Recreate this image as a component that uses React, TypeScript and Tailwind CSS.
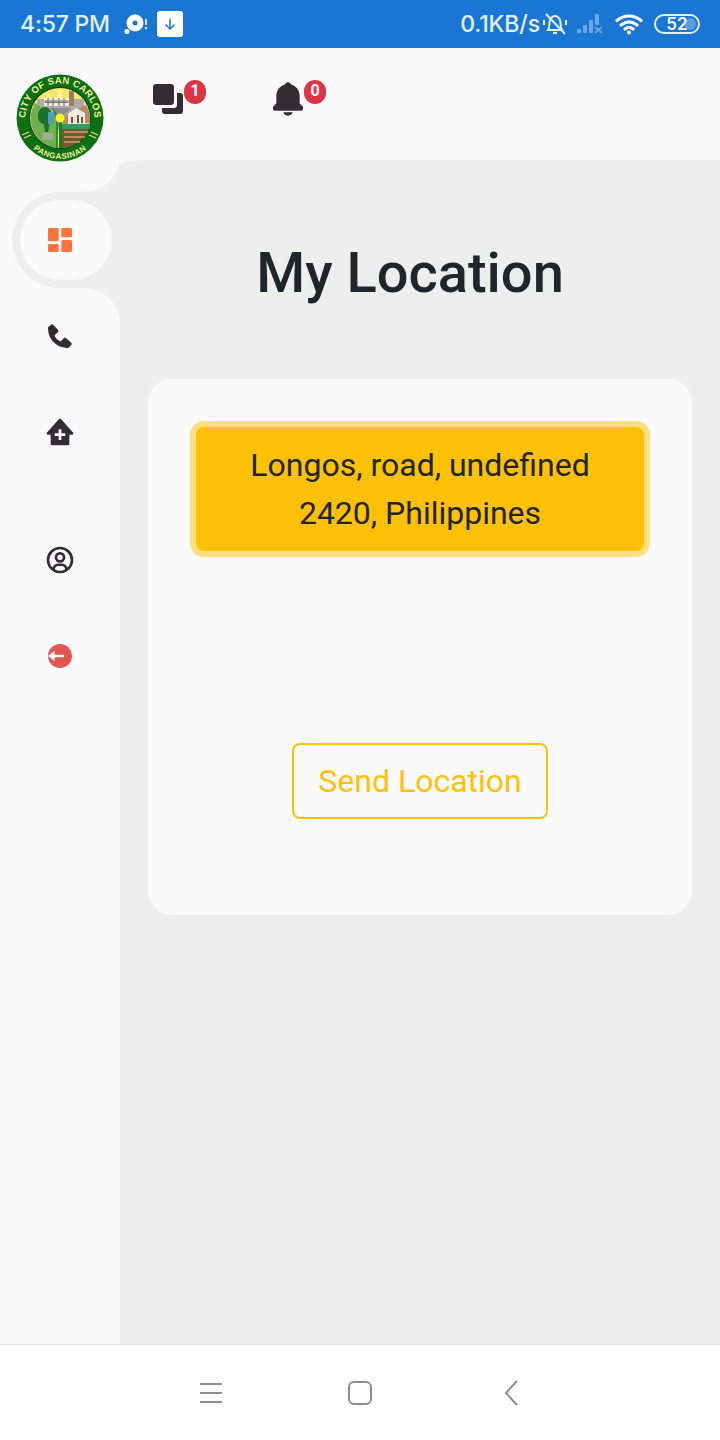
import { BiSolidBell, BiSolidClinic, BiSolidCopy, BiSolidDashboard, BiSolidLogOutCircle, BiSolidPhone, BiUserCircle } from 'react-icons/bi';

function Logo() {
  return (
    <svg viewBox="0 0 88 88" className="w-[88px] h-[88px]">
      <defs>
        <path id="arcTop" d="M 44 78.500 A 34.500 34.500 0 0 1 44 9.500 A 34.500 34.500 0 0 1 44 78.500" />
        <path id="arcBottom" d="M 3 44 A 41 41 0 0 0 85 44" />
      </defs>
      <circle cx="44" cy="44" r="43.500" fill="#0b7012" />
      <circle cx="44" cy="44" r="31" fill="#183d12" />
      <circle cx="44" cy="44" r="30" fill="#f3e96a" />
      {/* top: sunrise, city hall and road */}
      <path d="M44 15 L40 30 L48 30 Z M30 18 L37 30 L41 30 Z M58 18 L51 30 L47 30 Z" fill="#fff8b0" />
      <path d="M21 25 h47 v9 l-24 10 l-23 -10 Z" fill="#b0aca4" />
      <path d="M28 24 h25 v8 h-25 Z" fill="#efece6" />
      <path d="M29 27 h23 v1.500 h-23 Z M32 24 v8 M37 24 v8 M43 24 v8 M48 24 v8" stroke="#6f6a60" strokeWidth="1" fill="none" />
      <path d="M53 17 h5 v15 h-5 Z" fill="#9a7d62" />
      <path d="M44 44 L33 34 H56 Z" fill="#8d8d8d" />
      {/* left: forest */}
      <path d="M44 44 L19 29 A30 30 0 0 0 40 74 Z" fill="#6db04f" />
      <path d="M22 44 a7 9 0 1 1 12 4 l-2 10 h-3 l-1 -8 a7 7 0 0 1 -6 -6 Z" fill="#1e6f2b" />
      <path d="M32 38 h6 v12 h-6 Z" fill="#4fa0bd" />
      <path d="M26 59 h11 v7 h-11 Z" fill="#a6ad8e" />
      <path d="M36 32 l6 10 v32 h-2 v-28 Z" fill="#2f8a2f" />
      {/* right: heritage building */}
      <path d="M44 44 L70 31 A30 30 0 0 1 74 49 L47 50 Z" fill="#b98a66" />
      <path d="M52 40 l8 -6 l9 5 v11 h-17 Z" fill="#f3ece0" />
      <path d="M55 43 h2 v6 h-2 Z M61 41 h2 v8 h-2 Z M65 43 h2 v6 h-2 Z" fill="#7a4e38" />
      {/* bottom right: fields */}
      <path d="M46 50 H74 A30 30 0 0 1 46 74 Z" fill="#72582f" />
      <path d="M46 50 H74 V55 H46 Z" fill="#2e9b66" />
      <path d="M48 57 H72 V59 H48 Z M48 62 H69 V64 H48 Z M48 67 H64 V69 H48 Z" fill="#b98d5c" />
      <path d="M43 46 h3 v28 h-3 Z" fill="#1f7a26" />
      <circle cx="44" cy="44" r="4.500" fill="#fbf52a" />
      {/* laurels */}
      <path d="M6 61 l7 -3 M8 64 l7 -3" stroke="#e8e27a" strokeWidth="1.300" />
      <path d="M82 61 l-7 -3 M80 64 l-7 -3" stroke="#e8e27a" strokeWidth="1.300" />
      <text className="font-['Liberation_Sans',sans-serif] font-bold" fontSize="9.500" letterSpacing="0.300" fill="#f5f19a">
        <textPath href="#arcTop" startOffset="50%" textAnchor="middle">CITY OF SAN CARLOS</textPath>
      </text>
      <text className="font-['Liberation_Sans',sans-serif] font-bold" fontSize="8" letterSpacing="0.500" fill="#f5f19a">
        <textPath href="#arcBottom" startOffset="50%" textAnchor="middle">PANGASINAN</textPath>
      </text>
    </svg>
  );
}

function NavIcon({ children }: { children: React.ReactNode }) {
  return <div className="h-24 flex items-center justify-center">{children}</div>;
}

function HeaderIcon({ count, children }: { count: number; children: React.ReactNode }) {
  return (
    <div className="relative w-10 h-10 text-[#312d35] flex items-center justify-center">
      {children}
      <span className="absolute top-px -right-[18px] w-[22px] h-[24px] rounded-full bg-[#dc3545] text-[#fafafa] text-[16px] leading-[22px] font-bold text-center">
        {count}
      </span>
    </div>
  );
}

export default function App() {
  return (
    <div className="w-[720px] h-[1440px] flex flex-col bg-[#eeeeee] font-['Roboto',sans-serif] overflow-hidden">
      {/* Status bar */}
      <div className="h-12 shrink-0 bg-[#1976d2] text-[#e3f1fd] flex items-center justify-between pl-[20px] pr-[20px] font-['Inter',sans-serif] font-medium">
        <div className="flex items-center">
          <span className="text-[23px] tracking-[-0.2px]">4:57 PM</span>
          <svg viewBox="0 0 26 24" className="w-[26px] h-6 ml-[13px]">
            <circle cx="12" cy="11" r="8.500" fill="#fff" />
            <circle cx="12" cy="11" r="2.500" fill="#1976d2" />
            <circle cx="4" cy="19.500" r="2.500" fill="#fff" />
            <path d="M23 7v6" stroke="#fff" strokeWidth="1.600" />
            <path d="M23 15v2" stroke="#fff" strokeWidth="1.600" />
          </svg>
          <div className="w-[26px] h-[26px] ml-[8px] rounded-[3px] bg-white flex items-center justify-center">
            <svg viewBox="0 0 16 16" className="w-4 h-4" fill="none" stroke="#1976d2" strokeWidth="1.500">
              <path d="M8 2.500v10M3.500 8.500 8 13l4.500-4.500" />
            </svg>
          </div>
        </div>
        <div className="flex items-center">
          <span className="text-[23px] tracking-[-0.1px]">0.1KB/s</span>
          <svg viewBox="0 0 26 26" className="w-[26px] h-[26px] ml-[2px]" fill="none" stroke="#e3f1fd" strokeWidth="2">
            <path d="M6 19c2-3 1-7 2-10 1-2 3-4 5-4s4 2 5 4c1 3 0 7 2 10Z" />
            <path d="M11 22h4M4 3l19 20M2 9v5M24 9v5" />
          </svg>
          <svg viewBox="0 0 28 24" className="w-[28px] h-6 ml-[8px]" fill="#6ba6e6">
            <rect x="1" y="17" width="4" height="4" rx="1" />
            <rect x="7" y="13" width="4" height="8" rx="1" />
            <rect x="13" y="8" width="4" height="13" rx="1" />
            <rect x="19" y="2" width="4" height="11" rx="1" />
            <path d="M19 15l7 6M26 15l-7 6" stroke="#6ba6e6" strokeWidth="1.800" />
          </svg>
          <svg viewBox="0 0 28 22" className="w-[28px] h-[22px] ml-[11px]" fill="none" stroke="#fff" strokeWidth="3.200" strokeLinecap="round">
            <path d="M2 7.500c7-6 17-6 24 0M6 12c5-4 11-4 16 0M10 16c2.500-2 5.500-2 8 0" />
            <circle cx="14" cy="19.500" r="2" fill="#fff" stroke="none" />
          </svg>
          <div className="relative w-[46px] h-[20px] ml-[11px] rounded-full border-2 border-[#e3f1fd] overflow-hidden flex items-center justify-center">
            <div className="absolute right-[2px] top-[2px] bottom-[2px] w-[12px] rounded-full bg-[#5b9de0]" />
            <span className="relative text-[17px] leading-none font-semibold text-white">52</span>
          </div>
        </div>
      </div>

      <div className="flex-1 flex min-h-0">
        {/* Sidebar */}
        <aside className="w-[120px] shrink-0 flex flex-col">
          <div className="h-[144px] bg-[#fafafa] rounded-br-[36px] pt-[26px] pl-4">
            <Logo />
          </div>
          <div className="h-24 bg-[#fafafa] pl-3">
            <div className="h-full bg-[#eeeeee] rounded-l-[48px] py-2 pl-2 pr-2">
              <div className="h-full bg-[#fafafa] rounded-[40px] flex items-center pl-6">
                <BiSolidDashboard className="w-8 h-8 text-[#fd7238]" />
              </div>
            </div>
          </div>
          <div className="flex-1 bg-[#fafafa] rounded-tr-[36px]">
            <NavIcon>
              <BiSolidPhone className="w-8 h-8 text-[#312d35]" />
            </NavIcon>
            <NavIcon>
              <BiSolidClinic className="w-8 h-8 text-[#312d35]" />
            </NavIcon>
            <div className="h-8" />
            <NavIcon>
              <BiUserCircle className="w-8 h-8 text-[#312d35]" />
            </NavIcon>
            <NavIcon>
              <BiSolidLogOutCircle className="w-8 h-8 text-[#e2564f]" />
            </NavIcon>
          </div>
        </aside>

        <div className="flex-1 flex flex-col bg-[#fafafa]">
          {/* Top bar */}
          <header className="h-[112px] shrink-0 flex items-start pt-[31px] pl-[28px] gap-[80px]">
            <HeaderIcon count={1}>
              <BiSolidCopy className="w-9 h-9 -scale-y-100" />
            </HeaderIcon>
            <HeaderIcon count={0}>
              <BiSolidBell className="w-10 h-10" />
            </HeaderIcon>
          </header>

          <main className="flex-1 bg-[#eeeeee] rounded-tl-[22px_6px] px-7">
            <h1 className="mt-[75px] pr-5 text-center text-[56px] leading-[76px] font-medium text-[#212529]">My Location</h1>
            <section className="mt-[68px] h-[536px] rounded-[24px] bg-[#fafafa] flex flex-col items-center pt-[48px]">
              <div className="w-[448px] h-[124px] rounded-[8px] bg-[#ffc107] ring-[6px] ring-[#ffc107]/50 text-[32px] leading-[48px] text-center text-[#212529] py-[14px] px-4">
                Longos, road, undefined 2420, Philippines
              </div>
              <button className="mt-[192px] w-[256px] h-[76px] rounded-[8px] border-2 border-[#ffc107] text-[32px] text-[#ffc107]">
                Send Location
              </button>
            </section>
          </main>
        </div>
      </div>

      {/* Android nav bar */}
      <nav className="h-24 shrink-0 bg-white border-t border-[#e4e4e4] flex items-center justify-center text-[#8e8e8e]">
        <div className="w-[450px] grid grid-cols-3 justify-items-center items-center">
          <svg viewBox="0 0 22 20" className="w-[22px] h-5 ml-px" fill="none" stroke="currentColor" strokeWidth="2">
            <path d="M0 1h22M0 10h22M0 19h22" />
          </svg>
          <svg viewBox="0 0 24 24" className="w-6 h-6" fill="none" stroke="currentColor" strokeWidth="2">
            <rect x="1" y="1" width="22" height="22" rx="5" />
          </svg>
          <svg viewBox="0 0 14 26" className="w-[14px] h-[26px] ml-[2px]" fill="none" stroke="currentColor" strokeWidth="2">
            <path d="M13 1 2 13l11 12" />
          </svg>
        </div>
      </nav>
    </div>
  );
}
